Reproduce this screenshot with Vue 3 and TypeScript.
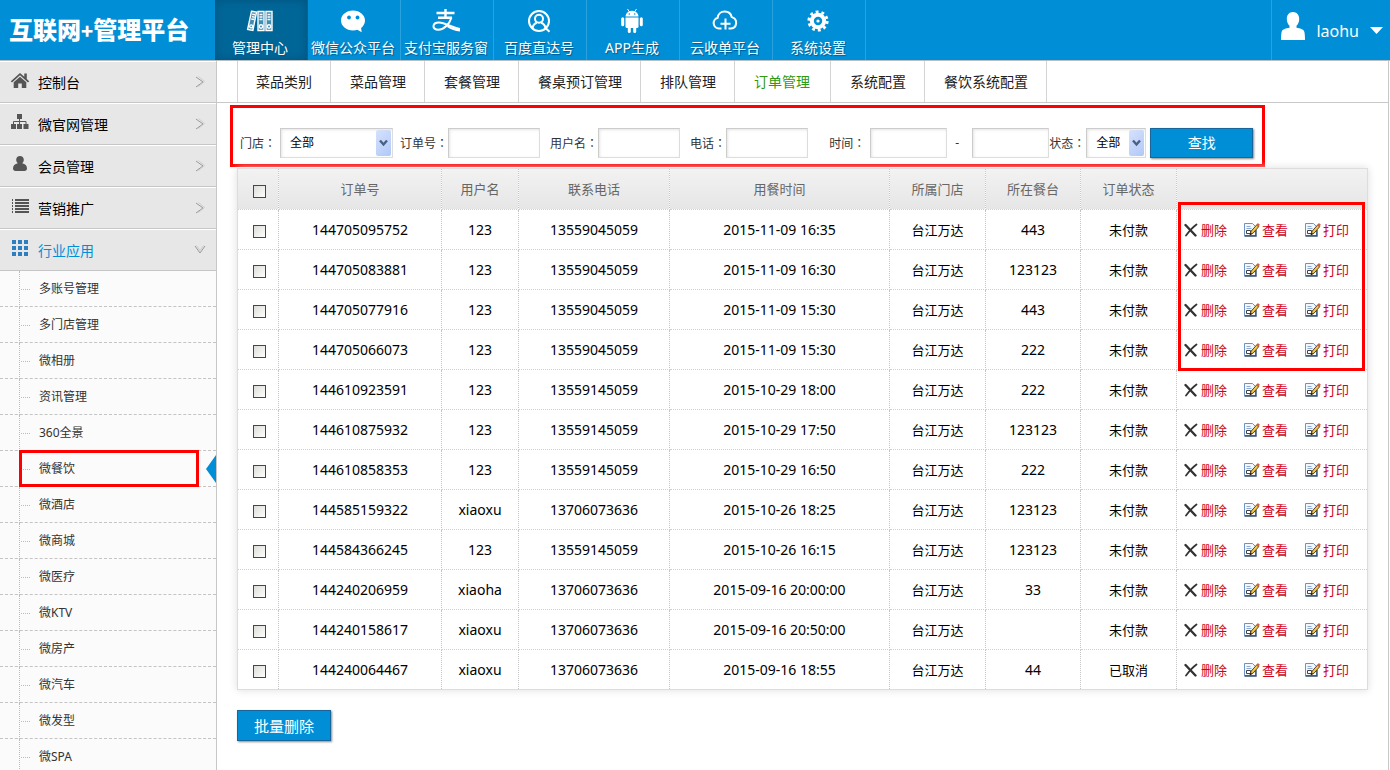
<script setup lang="ts">
import { computed, ref } from 'vue'

interface Order {
  no: string
  user: string
  phone: string
  time: string
  desk: string
  status: string
}

const navItems = [
  { icon: 'binders', label: '管理中心' },
  { icon: 'wechat', label: '微信公众平台' },
  { icon: 'alipay', label: '支付宝服务窗' },
  { icon: 'baidu', label: '百度直达号' },
  { icon: 'android', label: 'APP生成' },
  { icon: 'cloud', label: '云收单平台' },
  { icon: 'gear', label: '系统设置' },
]

const menuItems = [
  { icon: 'home', label: '控制台' },
  { icon: 'sitemap', label: '微官网管理' },
  { icon: 'member', label: '会员管理' },
  { icon: 'list', label: '营销推广' },
  { icon: 'grid', label: '行业应用' },
]

const subItems = [
  '多账号管理', '多门店管理', '微相册', '资讯管理', '360全景', '微餐饮', '微酒店',
  '微商城', '微医疗', '微KTV', '微房产', '微汽车', '微发型', '微SPA',
]

const tabs = [
  '菜品类别', '菜品管理', '套餐管理', '餐桌预订管理', '排队管理', '订单管理', '系统配置', '餐饮系统配置',
]

const row = (no: string, user: string, phone: string, time: string, desk: string, status = '未付款'): Order =>
  ({ no, user, phone, time, desk, status })

const orders = ref<Order[]>([
  row('144705095752', '123', '13559045059', '2015-11-09 16:35', '443'),
  row('144705083881', '123', '13559045059', '2015-11-09 16:30', '123123'),
  row('144705077916', '123', '13559045059', '2015-11-09 15:30', '443'),
  row('144705066073', '123', '13559045059', '2015-11-09 15:30', '222'),
  row('144610923591', '123', '13559145059', '2015-10-29 18:00', '222'),
  row('144610875932', '123', '13559145059', '2015-10-29 17:50', '123123'),
  row('144610858353', '123', '13559145059', '2015-10-29 16:50', '222'),
  row('144585159322', 'xiaoxu', '13706073636', '2015-10-26 18:25', '123123'),
  row('144584366245', '123', '13559145059', '2015-10-26 16:15', '123123'),
  row('144240206959', 'xiaoha', '13706073636', '2015-09-16 20:00:00', '33'),
  row('144240158617', 'xiaoxu', '13706073636', '2015-09-16 20:50:00', ''),
  row('144240064467', 'xiaoxu', '13706073636', '2015-09-16 18:55', '44', '已取消'),
])

const selected = ref<string[]>([])
const allSelected = computed({
  get: () => orders.value.length > 0 && selected.value.length === orders.value.length,
  set: (on: boolean) => { selected.value = on ? orders.value.map((o) => o.no) : [] },
})

function removeSelected() {
  orders.value = orders.value.filter((o) => !selected.value.includes(o.no))
  selected.value = []
}
function removeOne(no: string) {
  orders.value = orders.value.filter((o) => o.no !== no)
}
</script>

<template>
  <div class="shell">
    <header class="topbar">
      <h1 class="logo">互联网<span class="plus">+</span>管理平台</h1>
      <nav class="topnav">
        <a v-for="(item, i) in navItems" :key="item.icon" href="#" class="topnav-item" :class="{ current: i === 0 }">
          <svg v-if="item.icon === 'binders'" class="nav-icon" viewBox="0 0 30 26" fill="none" stroke="#fff" stroke-width="1.4">
            <path d="M6.500 3.200l5 .9-3.600 18.400-5.300-1z" fill="#fff" fill-opacity=".25" />
            <path d="M7.200 6.200l3 .6M6.800 8.600l3 .6M6.300 11l3 .5" />
            <circle cx="6.200" cy="18.400" r="1.500" />
            <path d="M13 3.500h6v19h-6zM21 3.500h6v19h-6z" fill="#fff" fill-opacity=".25" />
            <path d="M14.500 6.500h3M14.500 9h3M14.500 11.500h3M22.500 6.500h3M22.500 9h3M22.500 11.500h3" />
            <circle cx="16" cy="18.500" r="1.700" /><circle cx="24" cy="18.500" r="1.700" />
          </svg>
          <svg v-else-if="item.icon === 'wechat'" class="nav-icon" viewBox="0 0 30 26">
            <path d="M15 2.500C8.300 2.500 3 6.900 3 12.500s5.300 10 12 10c1.500 0 3-.2 4.300-.7l4.400 2.400-.6-4.300c2.400-1.800 3.900-4.500 3.900-7.400 0-5.600-5.300-10-12-10z" fill="#fff" />
            <circle cx="11" cy="9.500" r="1.900" fill="#008fd7" /><circle cx="19.500" cy="9.500" r="1.900" fill="#008fd7" />
          </svg>
          <svg v-else-if="item.icon === 'alipay'" class="nav-icon" viewBox="0 0 30 26" fill="none" stroke="#fff" stroke-width="2.400">
            <path d="M5.500 5h18M14.500 1v8M7 9.800h14" />
            <path d="M20.500 9.500c-2 6.500-7.500 12.200-13 12.200-3.500 0-5.200-1.700-5-3.700.2-2.200 2.500-3.500 5.500-3.500 6.500 0 13 5.500 21 6.500" stroke-width="2" />
            <path d="M17 17.500c4 2.500 8 3.500 12 3.300v2.700c-5-.2-9-2-13-4.500z" fill="#fff" stroke="none" />
          </svg>
          <svg v-else-if="item.icon === 'baidu'" class="nav-icon" viewBox="0 0 30 26" fill="none" stroke="#fff" stroke-width="2">
            <circle cx="15" cy="13" r="10" />
            <circle cx="15" cy="10.800" r="4" />
            <path d="M8.500 20.500c.3-3 2-5 4.300-5.800M21.500 20.500c-.3-3-2-5-4.300-5.800M21.500 20l4 3.800" />
          </svg>
          <svg v-else-if="item.icon === 'android'" class="nav-icon" viewBox="0 0 30 26" fill="#fff">
            <path d="M8.500 8.500a6.500 5.700 0 0 1 13 0z" />
            <path d="M10.500 1l2 3M19.500 1l-2 3" stroke="#fff" stroke-width="1" />
            <path d="M8.500 9.500h13v9a1.500 1.500 0 0 1-1.500 1.500H10a1.500 1.500 0 0 1-1.500-1.500z" />
            <rect x="4.200" y="9.200" width="3" height="9" rx="1.500" /><rect x="22.800" y="9.200" width="3" height="9" rx="1.500" />
            <rect x="10.800" y="17" width="3" height="8" rx="1.500" /><rect x="16.200" y="17" width="3" height="8" rx="1.500" />
            <circle cx="12.300" cy="6" r=".8" fill="#008fd7" /><circle cx="17.700" cy="6" r=".8" fill="#008fd7" />
          </svg>
          <svg v-else-if="item.icon === 'cloud'" class="nav-icon" viewBox="0 0 30 26" fill="none" stroke="#fff" stroke-width="2">
            <path d="M11.500 20.500H9a5.500 5.500 0 0 1-1.300-10.800C8 6 11 3.500 14.700 3.500c3.600 0 6.300 2.300 7 5.600a5.800 5.800 0 0 1-.7 11.400h-2.500" />
            <path d="M15.500 10.500v11M10.500 15.800h10" />
          </svg>
          <svg v-else class="nav-icon" viewBox="0 0 30 26" fill="none" stroke="#fff">
            <circle cx="15" cy="13" r="6.200" stroke-width="4" />
            <circle cx="15" cy="13" r="9.200" stroke-width="2.800" stroke-dasharray="2.900 2.917" />
            <circle cx="15" cy="13" r="1.600" fill="#fff" stroke="none" />
          </svg>
          <span>{{ item.label }}</span>
        </a>
      </nav>
      <button type="button" class="user">
        <svg class="user-icon" viewBox="0 0 24 28" fill="#fff">
          <path d="M12 0c3.700 0 6.200 2.800 6.200 6.800 0 3-1 5.600-2.700 7v2c3.500.8 7 .9 7.900 4.200.4 2 .6 4.500.6 8H0c0-3.500.2-6 .6-8 .9-3.300 4.400-3.400 7.900-4.200v-2c-1.700-1.400-2.700-4-2.700-7C5.800 2.800 8.300 0 12 0z" />
        </svg>
        <span>laohu</span>
        <svg class="caret" viewBox="0 0 13 7" fill="#fff"><path d="M0 0h13L6.500 7z" /></svg>
      </button>
    </header>

    <div class="body">
      <aside class="sidebar">
        <a v-for="item in menuItems" :key="item.icon" href="#" class="menu-item" :class="{ open: item.icon === 'grid' }">
          <svg v-if="item.icon === 'home'" class="menu-icon" viewBox="0 0 20 20" fill="#555">
            <path d="M10 3L.8 11.300l1.200 1.200 8-7.200 8 7.200 1.200-1.200-2.400-2.200V3.500h-2.500v3.300z" />
            <path d="M10 6.800l-6.300 5.500V18h4.500v-4.500h3.600V18h4.500v-5.700z" />
          </svg>
          <svg v-else-if="item.icon === 'sitemap'" class="menu-icon" viewBox="0 0 20 20" fill="#555">
            <path d="M7 2h5v5H7zM1 12h5v5H1zM7 12h5v5H7zM13.500 12h5v5h-5z" />
            <path d="M9.500 6v6M3.500 12V9.500H16V12" fill="none" stroke="#555" />
          </svg>
          <svg v-else-if="item.icon === 'member'" class="menu-icon" viewBox="0 0 20 20" fill="#555">
            <path d="M10 2c2.300 0 3.800 1.600 3.800 3.800 0 1.500-.6 2.700-1.600 3.500 3 .5 4.800 2.500 4.800 5.200 0 1.600-1 2.500-2.500 2.500h-9C4 17 3 16.100 3 14.500c0-2.700 1.800-4.700 4.800-5.200-1-.8-1.600-2-1.600-3.500C6.200 3.600 7.700 2 10 2z" />
          </svg>
          <svg v-else-if="item.icon === 'list'" class="menu-icon" viewBox="0 0 20 20" fill="#555">
            <path d="M2 3h1v2H2zM5 3h14v2H5zM2 6h1v2H2zM5 6h14v2H5zM2 9h1v2H2zM5 9h14v2H5zM2 12h1v2H2zM5 12h14v2H5zM2 15h1v2H2zM5 15h14v2H5z" />
          </svg>
          <svg v-else class="menu-icon" viewBox="0 0 20 20" fill="#2d7fc0">
            <path d="M2 2h4v4H2zM8 2h4v4H8zM14 2h4v4h-4zM2 8h4v4H2zM8 8h4v4H8zM14 8h4v4h-4zM2 14h4v4H2zM8 14h4v4H8zM14 14h4v4h-4z" />
          </svg>
          <span class="menu-label">{{ item.label }}</span>
          <svg class="chevron" viewBox="0 0 12 12" fill="none">
            <path v-if="item.icon === 'grid'" d="M1 2l5 7 5-7" stroke="#999" />
            <path v-if="item.icon === 'grid'" d="M2.500 1.500L6 6.500l3.500-5" stroke="#ccc" />
            <path v-if="item.icon !== 'grid'" d="M2 1l7 5-7 5" stroke="#999" />
            <path v-if="item.icon !== 'grid'" d="M4.500 .5l6 5-6 5" stroke="#ccc" />
          </svg>
        </a>
        <ul class="submenu">
          <li v-for="name in subItems" :key="name" :class="{ active: name === '微餐饮' }">
            <a href="#">{{ name }}</a>
          </li>
        </ul>
      </aside>

      <main class="main">
        <nav class="tabs">
          <a v-for="tab in tabs" :key="tab" href="#" :class="{ current: tab === '订单管理' }">{{ tab }}</a>
        </nav>

        <form class="filter" @submit.prevent>
          <label for="f-shop">门店<span class="colon">：</span></label>
          <span class="select-box shop">
            <select id="f-shop"><option>全部</option></select>
            <svg class="drop" viewBox="0 0 15 26"><path d="M4 10.500l3.500 4 3.500-4" fill="none" stroke="#4a6185" stroke-width="2.400" /></svg>
          </span>
          <label for="f-no" class="gap-s">订单号<span class="colon">：</span></label>
          <input id="f-no" type="text" class="w-l" />
          <label for="f-user" class="gap-m">用户名<span class="colon">：</span></label>
          <input id="f-user" type="text" class="w-m" />
          <label for="f-phone" class="gap-m">电话<span class="colon">：</span></label>
          <input id="f-phone" type="text" class="w-m" />
          <label for="f-from" class="gap-l">时间<span class="colon">：</span></label>
          <input id="f-from" type="text" class="w-s from" />
          <label for="f-to" class="dash">-</label>
          <input id="f-to" type="text" class="w-s" />
          <label for="f-status">状态<span class="colon">：</span></label>
          <span class="select-box status">
            <select id="f-status"><option>全部</option></select>
            <svg class="drop" viewBox="0 0 15 26"><path d="M4 10.500l3.500 4 3.500-4" fill="none" stroke="#4a6185" stroke-width="2.400" /></svg>
          </span>
          <button type="submit" class="btn search">查找</button>
        </form>

        <div class="table-wrap">
          <table>
            <colgroup>
              <col class="c-check" /><col class="c-no" /><col class="c-user" /><col class="c-phone" /><col />
              <col class="c-shop" /><col class="c-desk" /><col class="c-shop" /><col class="c-act" />
            </colgroup>
            <thead>
              <tr>
                <th><input v-model="allSelected" type="checkbox" aria-label="全选" /></th>
                <th>订单号</th><th>用户名</th><th>联系电话</th><th>用餐时间</th>
                <th>所属门店</th><th>所在餐台</th><th>订单状态</th><th></th>
              </tr>
            </thead>
            <tbody>
              <tr v-for="o in orders" :key="o.no">
                <td><input v-model="selected" type="checkbox" :value="o.no" :aria-label="o.no" /></td>
                <td>{{ o.no }}</td>
                <td>{{ o.user }}</td>
                <td>{{ o.phone }}</td>
                <td>{{ o.time }}</td>
                <td class="han">台江万达</td>
                <td>{{ o.desk }}</td>
                <td class="han">{{ o.status }}</td>
                <td class="han">
                  <div class="actions">
                    <a href="#" @click.prevent="removeOne(o.no)">
                      <svg class="cross" viewBox="0 0 15 16" fill="none" stroke="#333" stroke-linecap="round">
                        <path d="M1.500 3l10 10.500" stroke-width="2.400" /><path d="M12.500 2.500C9 5 5 9.500 2 13.500" stroke-width="1.800" />
                      </svg>删除</a>
                    <a v-for="act in ['查看', '打印']" :key="act" href="#">
                      <svg class="edit" viewBox="0 0 16 16">
                        <path d="M.5 1.500h8l3 3v9H.5z" fill="#f4f8fd" stroke="#6f92c4" />
                        <path d="M.5 14h11.500V8" fill="none" stroke="#34506f" stroke-width="1.400" />
                        <path d="M2.500 4.500h4M2.500 6.500h5" stroke="#8fabd3" />
                        <path d="M2.500 8.500h4v3h-4z" fill="#fff" stroke="#444" />
                        <path d="M6 12.800l1.200-3.700 5.600-6.300 2 1.800-5.600 6.400z" fill="#f0c84e" stroke="#5a4520" />
                        <path d="M12 3.200l1.900-2.100 2 1.700-1.900 2.200z" fill="#c9604c" />
                        <path d="M5.800 13l.8-2.200 1.500 1.300z" fill="#111" />
                      </svg>{{ act }}</a>
                  </div>
                </td>
              </tr>
            </tbody>
          </table>
          <div class="mark"></div>
        </div>

        <button type="button" class="btn batch" @click="removeSelected">批量删除</button>
      </main>
    </div>
  </div>
</template>

<style>
body {
  margin: 0;
  background: #fff;
}
</style>

<style scoped>
*,
*::before {
  box-sizing: border-box;
}
.shell {
  height: 100vh;
  overflow: hidden;
  display: flex;
  flex-direction: column;
  font: 14px/20px "Noto Sans", "Noto Sans CJK SC", sans-serif;
  color: #000;
}
a {
  color: inherit;
  text-decoration: none;
}
button,
input,
select {
  font: inherit;
  color: inherit;
  margin: 0;
}

/* top bar */
.topbar {
  flex: none;
  display: flex;
  height: 61px;
  background: #008fd7;
  border-bottom: 1px solid #b9bec1;
}
.logo {
  width: 215px;
  margin: 0;
  padding-left: 9px;
  font: 900 24px/58px "Noto Sans CJK SC", sans-serif;
  color: #fff;
  white-space: nowrap;
}
.plus {
  font-size: 20px;
}
.topnav {
  display: flex;
  flex: 1;
}
.topnav-item {
  width: 93px;
  padding: 8px 2px 0 0;
  display: flex;
  flex-direction: column;
  align-items: center;
  color: #fff;
  white-space: nowrap;
  border-right: 1px solid #2ba2de;
  text-shadow: 1px 1px 1px #00588a;
}
.topnav-item span {
  margin-top: 4px;
}
.topnav-item.current {
  background: #006698;
  box-shadow: inset 0 0 8px #00527c;
  border-right-color: #006698;
}
.nav-icon {
  width: 30px;
  height: 26px;
}
.user {
  display: flex;
  align-items: center;
  padding: 1px 7px 0 9px;
  border: 0;
  border-left: 1px solid #2ba2de;
  background: none;
  color: #fff;
  font-size: 16px;
}
.user-icon {
  width: 24px;
  height: 28px;
  margin: 0 11px 10px 0;
}
.caret {
  width: 13px;
  height: 7px;
  margin-left: 11px;
}

.body {
  flex: 1;
  min-height: 0;
  display: flex;
}

/* sidebar */
.sidebar {
  flex: none;
  width: 217px;
  border-right: 1px solid #c8c8c8;
  background: #fbfbfb;
}
.menu-item {
  display: flex;
  align-items: center;
  height: 42px;
  padding: 0 10px;
  background: #e7e7e7;
  border-top: 1px solid #fff;
  border-bottom: 1px solid #c6c6c6;
}
.menu-icon {
  width: 20px;
  height: 20px;
  margin: 0 8px 4px 0;
}
.menu-label {
  flex: 1;
  padding-top: 2px;
}
.menu-item.open {
  color: #008fd7;
}
.chevron {
  width: 12px;
  height: 12px;
}
.submenu {
  margin: 0;
  padding: 0;
  list-style: none;
  font-size: 12px;
  color: #333;
}
.submenu li {
  position: relative;
  height: 36px;
  padding-left: 19px;
  border-bottom: 1px dashed #c4c4c4;
}
.submenu a {
  display: flex;
  align-items: center;
  height: 36px;
  border-left: 1px dotted #bbb;
}
.submenu a::before {
  content: "";
  width: 9px;
  margin: 0 9px 0 1px;
  border-top: 1px dotted #bbb;
}
.submenu .active::before {
  content: "";
  position: absolute;
  top: -1px;
  left: 19px;
  right: 17px;
  height: 37px;
  border: 3px solid #f00;
}
.submenu .active::after {
  content: "";
  position: absolute;
  right: 0;
  top: 4px;
  border: 14px solid transparent;
  border-left: 0;
  border-right: 10px solid #008fd7;
}

/* content */
.main {
  flex: 1;
  min-width: 0;
  margin-right: 1px;
  border-right: 1px solid #c8c8c8;
}
.tabs {
  display: flex;
  height: 42px;
  padding-left: 20px;
  border-bottom: 1px solid #c8c8c8;
  line-height: 42px;
  color: #222;
}
.tabs a {
  padding: 0 18px 0 19px;
  border-right: 1px solid #d4d4d4;
  white-space: nowrap;
}
.tabs a:first-child {
  padding-left: 18px;
  border-left: 1px solid #d4d4d4;
}
.tabs .current {
  padding: 0 20px 0 19px;
  color: #2f9a10;
}
.filter {
  display: flex;
  align-items: center;
  width: fit-content;
  height: 62px;
  margin: 2px 0 0 13px;
  padding: 14px 9px 0 7px;
  border: 3px solid #f00;
  font-size: 12px;
  color: #333;
  white-space: nowrap;
}
.colon {
  font-family: "Noto Sans CJK TC", sans-serif;
}
.filter input,
.filter select {
  height: 30px;
  border: 1px solid #ccc;
  border-right-color: #ddd;
  border-bottom-color: #ddd;
  border-radius: 0;
  background: #fff;
  box-shadow: inset 1px 1px 3px #e4e4e4;
  outline: 0;
}
.gap-s {
  margin-left: 7px;
}
.gap-m {
  margin-left: 10px;
}
.gap-l {
  margin-left: 21px;
}
.w-l {
  width: 92px;
}
.w-m {
  width: 82px;
}
.w-s {
  width: 77px;
}
.from {
  margin-left: 5px;
}
.dash {
  width: 25px;
  padding-left: 8px;
}
.select-box {
  position: relative;
  display: flex;
}
.shop {
  width: 113px;
  margin-left: 4px;
}
.status {
  width: 60px;
  margin-left: 1px;
}
.select-box select {
  width: 100%;
  padding: 0 0 0 9px;
  appearance: none;
  color: #000;
}
.drop {
  position: absolute;
  top: 2px;
  right: 2px;
  width: 15px;
  height: 26px;
  background: linear-gradient(135deg, #d6e2fd, #b0c8f8);
  border-radius: 2px;
  pointer-events: none;
}
.btn {
  border: 1px solid #1a659b;
  background: #008fd7;
  box-shadow: 1px 1px 2px #888;
  color: #fff;
  padding: 0;
}
.search {
  width: 103px;
  height: 30px;
  margin-left: 4px;
  font-size: 14px;
}
.batch {
  width: 94px;
  height: 31px;
  margin: 20px 0 0 20px;
  font-size: 15px;
}

.table-wrap {
  position: relative;
  margin: 1px 20px 0;
  border: 1px solid #ddd;
  box-shadow: 0 0 8px #ddd;
}
table {
  width: 100%;
  table-layout: fixed;
  border-collapse: separate;
  border-spacing: 0;
  text-align: center;
}
.c-check { width: 41px; }
.c-no { width: 163px; }
.c-user { width: 77px; }
.c-phone { width: 151px; }
.c-shop { width: 96px; }
.c-desk { width: 95px; }
.c-act { width: 190px; }
th,
td {
  height: 40px;
  padding: 0;
  border-right: 1px dotted #c4c4c4;
  border-bottom: 1px dotted #d0d0d0;
}
th:last-child,
td:last-child {
  border-right: 0;
}
tbody tr:last-child td {
  height: 39px;
  border-bottom: 0;
}
th {
  height: 41px;
  font-size: 13px;
  font-weight: 400;
  color: #666;
  background: linear-gradient(#f3f2f2, #e6e6e6) padding-box;
}
.han {
  font-size: 13px;
}
input[type="checkbox"] {
  display: block;
  width: 13px;
  height: 13px;
  margin: 4px 0 0 15px;
  appearance: none;
  border: 1px solid #1c5180;
  background: linear-gradient(135deg, #dcdcd7, #fff);
}
input[type="checkbox"]:checked {
  background: #21a121;
}
.actions {
  display: flex;
  gap: 17px;
  padding-left: 7px;
  color: #d0021b;
}
.actions a {
  display: flex;
  align-items: center;
  gap: 2px;
}
.cross {
  width: 15px;
  height: 16px;
}
.edit {
  width: 16px;
  height: 16px;
}
.mark {
  position: absolute;
  top: 33px;
  right: 2px;
  width: 187px;
  height: 169px;
  border: 3px solid #f00;
  pointer-events: none;
}
</style>
